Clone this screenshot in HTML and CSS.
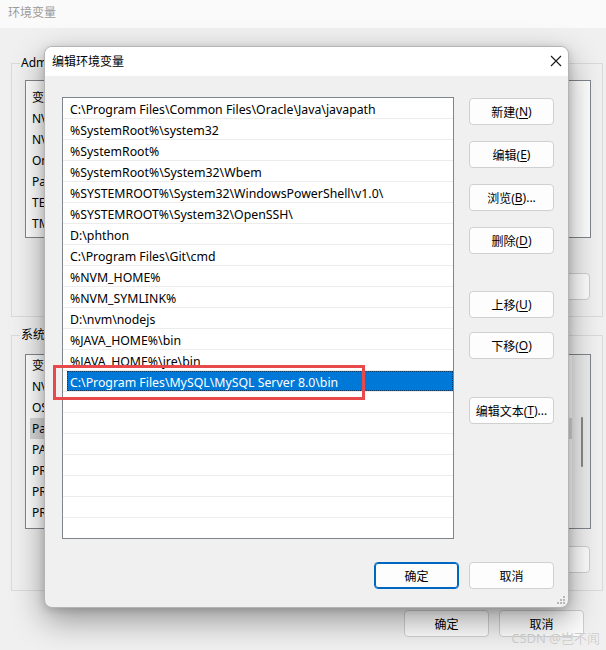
FILE: index.html
```html
<!DOCTYPE html>
<html lang="zh-CN">
<head>
<meta charset="utf-8">
<title>编辑环境变量</title>
<link rel="stylesheet" href="styles.css">
</head>
<body>
<div class="bgwin">
  <div class="bg-title">环境变量</div>
  <div class="bg-body">
    <fieldset class="grp grp-user">
      <legend>Administrator 的用户变量(U)</legend>
      <div class="bg-list list-user">
        <div class="bg-row bg-head">变量</div>
        <div class="bg-row">NVM_HOME</div>
        <div class="bg-row">NVM_SYMLINK</div>
        <div class="bg-row">OneDrive</div>
        <div class="bg-row">Path</div>
        <div class="bg-row">TEMP</div>
        <div class="bg-row">TMP</div>
      </div>
      <div class="bg-btns">
        <span class="bbtn">新建(N)...</span>
        <span class="bbtn">编辑(E)...</span>
        <span class="bbtn">删除(D)</span>
      </div>
    </fieldset>
    <fieldset class="grp grp-sys">
      <legend>系统变量(S)</legend>
      <div class="bg-list list-sys">
        <div class="bg-row bg-head">变量</div>
        <div class="bg-row">NVM_HOME</div>
        <div class="bg-row">OS</div>
        <div class="bg-row bg-sel">Path</div>
        <div class="bg-row">PATHEXT</div>
        <div class="bg-row">PROCESSOR_ARCHITECTURE</div>
        <div class="bg-row">PROCESSOR_IDENTIFIER</div>
        <div class="bg-row">PROCESSOR_LEVEL</div>
        <div class="bg-scroll"><span class="bg-thumb"></span></div>
      </div>
      <div class="bg-btns">
        <span class="bbtn">新建(W)...</span>
        <span class="bbtn">编辑(I)...</span>
        <span class="bbtn">删除(L)</span>
      </div>
    </fieldset>
    <div class="bg-foot">
      <span class="bbtn">确定</span>
      <span class="bbtn">取消</span>
    </div>
  </div>
  <div class="watermark">CSDN @岂不闻</div>
</div>

<div class="dialog">
  <div class="dlg-title">
    <span class="dlg-caption">编辑环境变量</span>
    <svg class="dlg-close" width="12" height="12" viewBox="0 0 12 12"><path d="M1 1 L11 11 M11 1 L1 11" stroke="#1a1a1a" stroke-width="1.1" fill="none"/></svg>
  </div>
  <div class="dlg-body">
    <div class="dlg-main">
      <div class="plist">
        <div class="prow"><span class="pcell">C:\Program Files\Common Files\Oracle\Java\javapath</span></div>
        <div class="prow"><span class="pcell">%SystemRoot%\system32</span></div>
        <div class="prow"><span class="pcell">%SystemRoot%</span></div>
        <div class="prow"><span class="pcell">%SystemRoot%\System32\Wbem</span></div>
        <div class="prow"><span class="pcell">%SYSTEMROOT%\System32\WindowsPowerShell\v1.0\</span></div>
        <div class="prow"><span class="pcell">%SYSTEMROOT%\System32\OpenSSH\</span></div>
        <div class="prow"><span class="pcell">D:\phthon</span></div>
        <div class="prow"><span class="pcell">C:\Program Files\Git\cmd</span></div>
        <div class="prow"><span class="pcell">%NVM_HOME%</span></div>
        <div class="prow"><span class="pcell">%NVM_SYMLINK%</span></div>
        <div class="prow"><span class="pcell">D:\nvm\nodejs</span></div>
        <div class="prow"><span class="pcell">%JAVA_HOME%\bin</span></div>
        <div class="prow"><span class="pcell">%JAVA_HOME%\jre\bin</span></div>
        <div class="prow selected"><span class="pcell">C:\Program Files\MySQL\MySQL Server 8.0\bin</span></div>
        <div class="prow"><span class="pcell"></span></div>
        <div class="prow"><span class="pcell"></span></div>
        <div class="prow"><span class="pcell"></span></div>
        <div class="prow"><span class="pcell"></span></div>
        <div class="prow"><span class="pcell"></span></div>
        <div class="prow"><span class="pcell"></span></div>
        <div class="prow last"><span class="pcell"></span></div>
      </div>
      <div class="side">
        <div class="bgroup">
          <span class="btn">新建(<u>N</u>)</span>
          <span class="btn">编辑(<u>E</u>)</span>
          <span class="btn">浏览(<u>B</u>)...</span>
          <span class="btn">删除(<u>D</u>)</span>
        </div>
        <div class="bgroup g2">
          <span class="btn">上移(<u>U</u>)</span>
          <span class="btn">下移(<u>O</u>)</span>
        </div>
        <div class="bgroup g3">
          <span class="btn">编辑文本(<u>T</u>)...</span>
        </div>
      </div>
    </div>
    <div class="dlg-foot">
      <span class="btn primary">确定</span>
      <span class="btn">取消</span>
    </div>
    <svg class="grip" width="8" height="8" viewBox="0 0 8 8">
      <rect x="6" y="0" width="2" height="2" fill="#b8b8b8"/>
      <rect x="3" y="3" width="2" height="2" fill="#b8b8b8"/>
      <rect x="6" y="3" width="2" height="2" fill="#b8b8b8"/>
      <rect x="0" y="6" width="2" height="2" fill="#b8b8b8"/>
      <rect x="3" y="6" width="2" height="2" fill="#b8b8b8"/>
      <rect x="6" y="6" width="2" height="2" fill="#b8b8b8"/>
    </svg>
  </div>
</div>

<div class="annot"></div>
</body>
</html>
```

FILE: styles.css
```css
* { box-sizing: border-box; }
html, body {
  margin: 0;
  padding: 0;
}
body {
  width: 606px;
  height: 650px;
  overflow: hidden;
  position: relative;
  background: #f0f0f0;
  font-family: "Noto Sans", "Noto Sans CJK SC", sans-serif;
  font-size: 12px;
  color: #000;
}

/* background window */
.bgwin {
  width: 606px;
  height: 650px;
  background: #f0f0f0;
}
.bg-title {
  height: 28px;
  background: #fafafa;
  color: #9a9a9a;
  padding-left: 8px;
  line-height: 26px;
  font-size: 12px;
}
.bg-body {
  padding: 27px 0 0 11px;
}
.grp {
  margin: 0;
  width: 592px;
  border: 1px solid #dadada;
  padding: 9px 12px 16px 13px;
  min-width: 0;
}
.grp legend {
  padding: 0 1px;
  margin-left: -5px;
  line-height: 16px;
  font-size: 12px;
}
.grp-sys {
  margin-top: 10px;
  padding-top: 11px;
  padding-bottom: 17px;
}
.bg-list {
  position: relative;
  background: #fff;
  border: 1px solid #80858c;
  width: 566px;
  padding-left: 4px;
}
.list-user {
  height: 158px;
  padding-top: 6px;
}
.list-sys {
  height: 175px;
}
.bg-row {
  height: 21px;
  line-height: 21px;
  padding-left: 2px;
}
.bg-sel { background: #d9d9d9; }
.bg-scroll {
  position: absolute;
  right: 0;
  top: 0;
  bottom: 0;
  width: 18px;
  background: #ececec;
}
.bg-thumb {
  position: absolute;
  left: 9px;
  top: 62px;
  width: 2px;
  height: 50px;
  background: #8a8a8a;
  border-radius: 1px;
}
.bg-btns {
  display: flex;
  justify-content: flex-end;
  gap: 10px;
  width: 565px;
  margin-top: 35px;
}
.grp-sys .bg-btns { margin-top: 17px; }
.bbtn {
  width: 85px;
  height: 27px;
  border: 1px solid #cfcfcf;
  border-radius: 4px;
  background: #fdfdfd;
  display: flex;
  align-items: center;
  justify-content: center;
}
.bg-foot {
  display: flex;
  gap: 10px;
  margin-left: 393px;
  margin-top: 19px;
}
.watermark {
  position: absolute;
  right: 6px;
  bottom: 3px;
  color: #cfcfcf;
  font-size: 13px;
  text-shadow: 0 0 1px #fff;
}

/* dialog */
.dialog {
  position: absolute;
  left: 44px;
  top: 46px;
  width: 525px;
  height: 562px;
  border-radius: 8px;
  background: #f0f0f0;
  border: 1px solid #b4b4b4;
  box-shadow: 0 12px 32px rgba(0,0,0,0.38), 0 2px 8px rgba(0,0,0,0.15);
  display: flex;
  flex-direction: column;
  overflow: hidden;
}
.dlg-title {
  height: 29px;
  background: #fff;
  display: flex;
  align-items: center;
  justify-content: space-between;
  padding: 0 6px 2px 7px;
  flex: none;
}
.dlg-caption { font-size: 12px; }
.dlg-body {
  flex: 1;
  position: relative;
  padding: 21px 14px 0 17px;
}
.dlg-main {
  display: flex;
  gap: 15px;
}
.plist {
  width: 392px;
  height: 442px;
  border: 1px solid #80858c;
  background: #fff;
  overflow: hidden;
}
.prow {
  height: 21px;
  border-bottom: 1px solid #ececec;
  display: flex;
}
.prow.last { border-bottom: none; }
.pcell {
  flex: 1;
  margin-left: 4px;
  padding-left: 3px;
  padding-top: 3px;
  line-height: 17px;
  font-size: 12.3px;
  white-space: nowrap;
}
.prow.selected .pcell {
  background: #0078d7;
  color: #fff;
  outline: 1px dotted #0b3a66;
  outline-offset: -1px;
}
.side {
  display: flex;
  flex-direction: column;
  padding-top: 1px;
}
.bgroup {
  display: flex;
  flex-direction: column;
  gap: 16px;
}
.bgroup.g2 { margin-top: 37px; gap: 14px; }
.bgroup.g3 { margin-top: 38px; }
.btn {
  width: 85px;
  height: 27px;
  border: 1px solid #d0d0d0;
  border-radius: 4px;
  background: #fdfdfd;
  display: flex;
  align-items: center;
  justify-content: center;
  font-size: 12px;
  white-space: nowrap;
}
.btn u { text-underline-offset: 2px; }
.dlg-foot {
  display: flex;
  justify-content: flex-end;
  gap: 10px;
  margin-top: 23px;
}
.btn.primary {
  border: 1px solid #0067c0;
  box-shadow: inset 0 0 0 1px #0067c0;
}
.grip {
  position: absolute;
  right: 3px;
  bottom: 3px;
}

/* annotation */
.annot {
  position: absolute;
  left: 53px;
  top: 365px;
  width: 312px;
  height: 35px;
  border: 3px solid #e8494b;
}
```
